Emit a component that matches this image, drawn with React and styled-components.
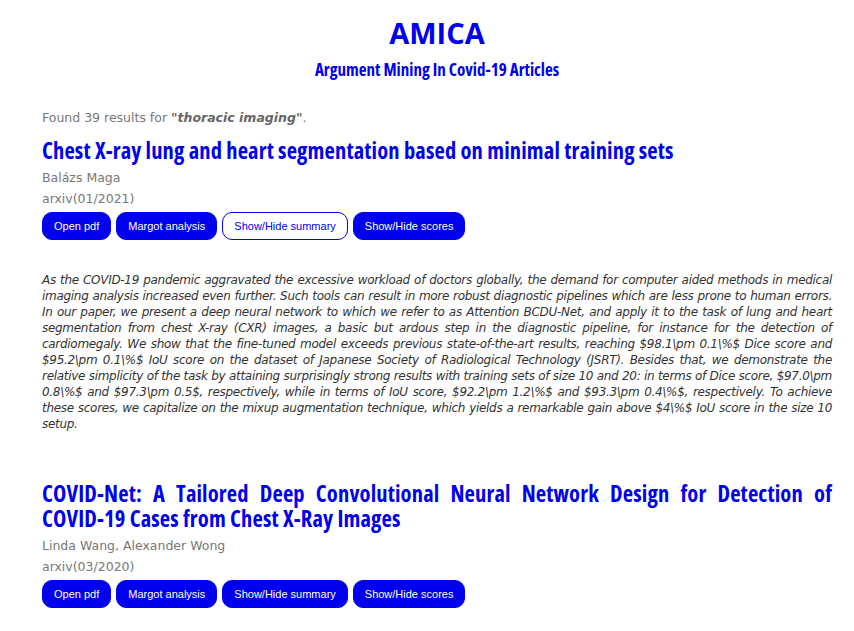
import React from "react";
import styled, { createGlobalStyle } from "styled-components";

const Global = createGlobalStyle`
  html, body { margin: 0; padding: 0; background: #fff; }
  body { font-family: "DejaVu Sans", Verdana, sans-serif; }
`;

const BLUE = "#0000ee";
const HEAD_FONT = `"Open Sans", "Liberation Sans Narrow", sans-serif`;

const Page = styled.div`
  padding: 0 22px 20px 42px;
`;

const Header = styled.header`
  text-align: center;
  padding-top: 15px;
`;

const Logo = styled.h1`
  margin: 0;
  font-family: ${HEAD_FONT};
  font-stretch: 90%;
  font-weight: 700;
  font-size: 29px;
  line-height: 36px;
  color: ${BLUE};
`;

const Tagline = styled.h2`
  margin: 8px 0 0;
  font-family: ${HEAD_FONT};
  font-stretch: 75%;
  font-weight: 700;
  font-size: 17px;
  line-height: 22px;
  color: ${BLUE};
`;

const Found = styled.p`
  margin: 28px 0 0;
  font-size: 12.5px;
  line-height: 18px;
  color: #777;
  b { font-style: italic; color: #666; }
`;

const Article = styled.article`
  margin-top: ${(p) => p.$gap}px;
`;

const Title = styled.h3`
  margin: 0;
  font-family: ${HEAD_FONT};
  font-stretch: 75%;
  font-weight: 700;
  font-size: 22.5px;
  letter-spacing: 0.15px;
  line-height: 25px;
  color: ${BLUE};
  text-align: justify;
`;

const JustLine = styled.span`
  display: block;
  text-align-last: justify;
`;

const Meta = styled.div`
  font-size: 12.5px;
  line-height: 21px;
  color: #777;
  &:first-of-type { margin-top: 4px; }
`;

const Buttons = styled.div`
  display: flex;
  gap: 5px;
  margin-top: 3px;
`;

const Button = styled.button`
  height: 28px;
  padding: 0 11px;
  border-radius: 10px;
  border: 1px solid ${BLUE};
  background: ${(p) => (p.$outline ? "#fff" : BLUE)};
  color: ${(p) => (p.$outline ? BLUE : "#fff")};
  font-family: "Liberation Sans", Arial, sans-serif;
  font-size: 11px;
  cursor: pointer;
`;

const Summary = styled.p`
  margin: 32px 0 0;
  font-style: italic;
  font-size: 12px;
  letter-spacing: -0.3px;
  line-height: 16px;
  color: #333;
  text-align: justify;
`;

const summary =
  "As the COVID-19 pandemic aggravated the excessive workload of doctors globally, the demand for computer aided methods in medical imaging analysis increased even further. Such tools can result in more robust diagnostic pipelines which are less prone to human errors. In our paper, we present a deep neural network to which we refer to as Attention BCDU-Net, and apply it to the task of lung and heart segmentation from chest X-ray (CXR) images, a basic but ardous step in the diagnostic pipeline, for instance for the detection of cardiomegaly. We show that the fine-tuned model exceeds previous state-of-the-art results, reaching $98.1\\pm 0.1\\%$ Dice score and $95.2\\pm 0.1\\%$ IoU score on the dataset of Japanese Society of Radiological Technology (JSRT). Besides that, we demonstrate the relative simplicity of the task by attaining surprisingly strong results with training sets of size 10 and 20: in terms of Dice score, $97.0\\pm 0.8\\%$ and $97.3\\pm 0.5$, respectively, while in terms of IoU score, $92.2\\pm 1.2\\%$ and $93.3\\pm 0.4\\%$, respectively. To achieve these scores, we capitalize on the mixup augmentation technique, which yields a remarkable gain above $4\\%$ IoU score in the size 10 setup.";

function ActionBar({ summaryOpen }) {
  return (
    <Buttons>
      <Button>Open pdf</Button>
      <Button>Margot analysis</Button>
      <Button $outline={summaryOpen}>Show/Hide summary</Button>
      <Button>Show/Hide scores</Button>
    </Buttons>
  );
}

export default function App() {
  return (
    <Page>
      <Global />
      <Header>
        <Logo>AMICA</Logo>
        <Tagline>Argument Mining In Covid-19 Articles</Tagline>
      </Header>
      <Found>
        Found 39 results for <b>"thoracic imaging"</b>.
      </Found>
      <Article $gap={11}>
        <Title>Chest X-ray lung and heart segmentation based on minimal training sets</Title>
        <Meta>Balázs Maga</Meta>
        <Meta>arxiv(01/2021)</Meta>
        <ActionBar summaryOpen />
        <Summary>{summary}</Summary>
      </Article>
      <Article $gap={49}>
        <Title>
          <JustLine>COVID-Net: A Tailored Deep Convolutional Neural Network Design for Detection of</JustLine>
          COVID-19 Cases from Chest X-Ray Images
        </Title>
        <Meta>Linda Wang, Alexander Wong</Meta>
        <Meta>arxiv(03/2020)</Meta>
        <ActionBar />
      </Article>
    </Page>
  );
}
